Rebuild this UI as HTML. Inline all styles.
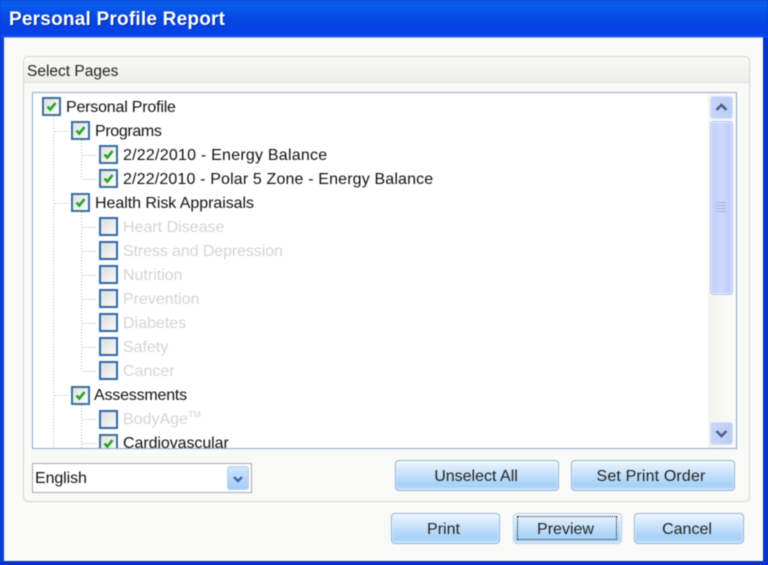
<!DOCTYPE html>
<html>
<head>
<meta charset="utf-8">
<style>
html,body{margin:0;padding:0;width:768px;height:565px;overflow:hidden;background:#0831d9}
#w{position:absolute;left:0;top:0;width:768px;height:565px;overflow:hidden;filter:blur(.45px);font-family:"Liberation Sans",sans-serif;color:#111}
#w div,#w svg{position:absolute;box-sizing:border-box}
.t{white-space:nowrap;font-size:16px;line-height:20px;height:20px}
.d{color:#d4d4d4}
.cb{width:19px;height:19px;border:2px solid #3a6ea0;background:linear-gradient(135deg,#e2e2dc,#fcfcfa)}
.cb.dis{border-color:#2f68a8;background:linear-gradient(135deg,#dedede,#f8f8f8)}
.cb svg{left:1px;top:1px}
.v{width:1px;background:repeating-linear-gradient(#b0b0a4 0 1px,#fff 1px 3px)}
.h{height:1px;background:repeating-linear-gradient(90deg,#b0b0a4 0 1px,#fff 1px 3px)}
.btn{border:1px solid #8fb4dc;border-radius:4px;background:linear-gradient(#f2f8fe 0%,#d3e7fb 30%,#a4d0f8 85%,#c4e0fa 100%);box-shadow:inset 0 0 0 1px rgba(255,255,255,.45)}
.bt{text-align:center;font-size:16px;color:#222;line-height:20px;white-space:nowrap}
</style>
</head>
<body>
<div id="w">
<div style="left:0;top:0;width:768px;height:38px;background:linear-gradient(#0a5ae0 0%,#0a5cf0 12%,#0548e0 50%,#0640e8 85%,#0a4fe8 100%)"></div>
<div class="t" style="left:9px;top:8px;font-size:19px;line-height:24px;height:24px;font-weight:bold;color:#fff;text-shadow:1px 1px 1px #0a2a90;letter-spacing:.22px">Personal Profile Report</div>
<div style="left:0;top:38px;width:4px;height:527px;background:#0a42d8"></div>
<div style="left:763px;top:38px;width:5px;height:527px;background:#0733c8"></div>
<div style="left:0;top:561px;width:768px;height:4px;background:#0733c8"></div>
<div style="left:4px;top:37px;width:759px;height:524px;background:#f9f9f7;border-top:1px solid #9db8ea"></div>

<div style="left:23px;top:56px;width:727px;height:446px;border:1px solid #d4d4d0;border-radius:5px;background:#f9f9f7"></div>
<div style="left:24px;top:57px;width:725px;height:26px;border-radius:4px 4px 0 0;background:linear-gradient(#f9f9f7,#eeeeea);border-bottom:1px solid #e2e2de"></div>
<div class="t" style="left:27px;top:62px;font-size:15.5px;color:#222">Select Pages</div>

<div style="left:32px;top:92px;width:705px;height:357px;border:1px solid #8ea8cc;background:#fff"></div>

<!-- tree lines -->
<div class="v" style="left:53px;top:116px;height:332px"></div>
<div class="v" style="left:81px;top:140px;height:39px"></div>
<div class="v" style="left:81px;top:212px;height:159px"></div>
<div class="v" style="left:81px;top:405px;height:43px"></div>
<div class="h" style="left:55px;top:131px;width:15px"></div>
<div class="h" style="left:55px;top:203px;width:15px"></div>
<div class="h" style="left:55px;top:395px;width:15px"></div>
<div class="h" style="left:83px;top:155px;width:15px"></div>
<div class="h" style="left:83px;top:179px;width:15px"></div>
<div class="h" style="left:83px;top:227px;width:15px"></div>
<div class="h" style="left:83px;top:251px;width:15px"></div>
<div class="h" style="left:83px;top:275px;width:15px"></div>
<div class="h" style="left:83px;top:299px;width:15px"></div>
<div class="h" style="left:83px;top:323px;width:15px"></div>
<div class="h" style="left:83px;top:347px;width:15px"></div>
<div class="h" style="left:83px;top:371px;width:15px"></div>
<div class="h" style="left:83px;top:419px;width:15px"></div>
<div class="h" style="left:83px;top:443px;width:15px"></div>

<!-- checked -->
<div class="cb" style="left:42px;top:97px"><svg width="13" height="13" viewBox="0 0 13 13"><path d="M2.5 6.5L5.3 9.5L10.5 3" fill="none" stroke="#22a32a" stroke-width="2.6"/></svg></div>
<div class="t" style="left:66px;top:97.5px;letter-spacing:-.2px">Personal Profile</div>
<div class="cb" style="left:71px;top:121px"><svg width="13" height="13" viewBox="0 0 13 13"><path d="M2.5 6.5L5.3 9.5L10.5 3" fill="none" stroke="#22a32a" stroke-width="2.6"/></svg></div>
<div class="t" style="left:95px;top:122px;letter-spacing:-.35px">Programs</div>
<div class="cb" style="left:99px;top:145px"><svg width="13" height="13" viewBox="0 0 13 13"><path d="M2.5 6.5L5.3 9.5L10.5 3" fill="none" stroke="#22a32a" stroke-width="2.6"/></svg></div>
<div class="t" style="left:123px;top:146px;letter-spacing:.23px">2/22/2010 - Energy Balance</div>
<div class="cb" style="left:99px;top:169px"><svg width="13" height="13" viewBox="0 0 13 13"><path d="M2.5 6.5L5.3 9.5L10.5 3" fill="none" stroke="#22a32a" stroke-width="2.6"/></svg></div>
<div class="t" style="left:123px;top:170px;letter-spacing:.15px">2/22/2010 - Polar 5 Zone - Energy Balance</div>
<div class="cb" style="left:71px;top:193px"><svg width="13" height="13" viewBox="0 0 13 13"><path d="M2.5 6.5L5.3 9.5L10.5 3" fill="none" stroke="#22a32a" stroke-width="2.6"/></svg></div>
<div class="t" style="left:95px;top:194px;letter-spacing:-.05px">Health Risk Appraisals</div>

<!-- disabled -->
<div class="cb dis" style="left:99px;top:217px"></div>
<div class="t d" style="left:123px;top:218px">Heart Disease</div>
<div class="cb dis" style="left:99px;top:241px"></div>
<div class="t d" style="left:123px;top:242px;letter-spacing:-.1px">Stress and Depression</div>
<div class="cb dis" style="left:99px;top:265px"></div>
<div class="t d" style="left:123px;top:266px">Nutrition</div>
<div class="cb dis" style="left:99px;top:289px"></div>
<div class="t d" style="left:123px;top:290px">Prevention</div>
<div class="cb dis" style="left:99px;top:313px"></div>
<div class="t d" style="left:123px;top:314px">Diabetes</div>
<div class="cb dis" style="left:99px;top:337px"></div>
<div class="t d" style="left:123px;top:338px">Safety</div>
<div class="cb dis" style="left:99px;top:361px"></div>
<div class="t d" style="left:123px;top:362px">Cancer</div>

<div class="cb" style="left:71px;top:386px"><svg width="13" height="13" viewBox="0 0 13 13"><path d="M2.5 6.5L5.3 9.5L10.5 3" fill="none" stroke="#22a32a" stroke-width="2.6"/></svg></div>
<div class="t" style="left:94px;top:386px;letter-spacing:-.2px">Assessments</div>
<div class="cb dis" style="left:99px;top:410px"></div>
<div class="t d" style="left:123px;top:410px">BodyAge<sup style="font-size:9px;line-height:0">TM</sup></div>
<div style="left:33px;top:434px;width:674px;height:14px;overflow:hidden">
  <div class="cb" style="left:66px;top:0"><svg width="13" height="13" viewBox="0 0 13 13"><path d="M2.5 6.5L5.3 9.5L10.5 3" fill="none" stroke="#22a32a" stroke-width="2.6"/></svg></div>
  <div class="t" style="left:90px;top:0;letter-spacing:-.07px">Cardiovascular</div>
</div>

<!-- scrollbar -->
<div style="left:708px;top:93px;width:28px;height:355px;background:linear-gradient(90deg,#f4f4ee,#fbfbf8)"></div>
<div style="left:710px;top:96px;width:23px;height:23px;border-radius:3px;border:1px solid #d8e2fa;background:linear-gradient(90deg,#c6d4fa,#bccdf8)"></div>
<svg style="left:710px;top:96px" width="23" height="23" viewBox="0 0 23 23"><path d="M6.5 14L11.5 9L16.5 14" fill="none" stroke="#4d6185" stroke-width="2.6"/></svg>
<div style="left:710px;top:121px;width:23px;height:174px;border-radius:3px;border:1px solid #b6c6ee;background:linear-gradient(90deg,#c2d0fa,#ccd8fb 50%,#bccbf8);box-shadow:inset 0 0 0 1px #e2e9fc"></div>
<div style="left:716px;top:202px;width:10px;height:1px;background:#9fb4ec"></div>
<div style="left:716px;top:205px;width:10px;height:1px;background:#9fb4ec"></div>
<div style="left:716px;top:208px;width:10px;height:1px;background:#9fb4ec"></div>
<div style="left:716px;top:211px;width:10px;height:1px;background:#9fb4ec"></div>
<div style="left:710px;top:422px;width:23px;height:23px;border-radius:3px;border:1px solid #d8e2fa;background:linear-gradient(90deg,#c6d4fa,#bccdf8)"></div>
<svg style="left:710px;top:422px" width="23" height="23" viewBox="0 0 23 23"><path d="M6.5 9L11.5 14L16.5 9" fill="none" stroke="#4d6185" stroke-width="2.6"/></svg>

<!-- combo -->
<div style="left:32px;top:463px;width:220px;height:30px;border:1px solid #a8a8a4;background:#fff"></div>
<div class="t" style="left:35px;top:469px;letter-spacing:-.1px">English</div>
<div style="left:227px;top:466px;width:22px;height:24px;border:1px solid #b4d2f4;border-radius:3px;background:linear-gradient(#cfe4fb,#a4cdf6)"></div>
<svg style="left:227px;top:466px" width="22" height="24" viewBox="0 0 22 24"><path d="M7 11L11 15L15 11" fill="none" stroke="#3a6aa8" stroke-width="2.4"/></svg>

<!-- buttons -->
<div class="btn" style="left:395px;top:460px;width:164px;height:31px"></div>
<div class="bt" style="left:394px;top:467px;width:164px">Unselect All</div>
<div class="btn" style="left:571px;top:460px;width:164px;height:31px"></div>
<div class="bt" style="left:569px;top:467px;width:164px;letter-spacing:.15px">Set Print Order</div>
<div class="btn" style="left:391px;top:513px;width:109px;height:31px"></div>
<div class="bt" style="left:389px;top:520px;width:109px">Print</div>
<div class="btn" style="left:513px;top:513px;width:109px;height:31px;border-color:#b4cdea"></div>
<div class="bt" style="left:511px;top:520px;width:109px">Preview</div>
<div style="left:517px;top:516px;width:100px;height:24px;border:1px dotted #111"></div>
<div class="btn" style="left:634px;top:513px;width:110px;height:31px"></div>
<div class="bt" style="left:632px;top:520px;width:110px">Cancel</div>
</div>
</body>
</html>
